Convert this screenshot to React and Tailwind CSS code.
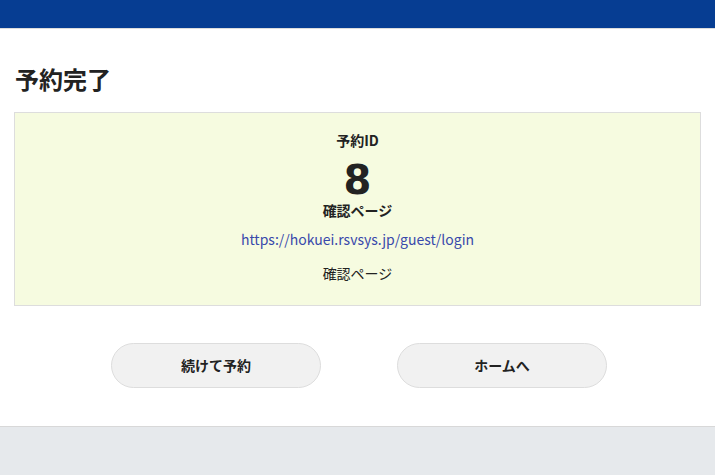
export default function App() {
  return (
    <div className="min-h-[475px] flex flex-col bg-white text-[#222] font-['Noto_Sans_CJK_JP','Noto_Sans',sans-serif]">
      <header className="h-[28px] bg-[#063d92] border-b border-[#dcdcdc] box-content" />
      <main className="flex-1 px-[14px] pt-[33px]">
        <h1 className="text-[24px] font-bold leading-[34px] pl-[1px]">予約完了</h1>
        <div className="mt-[16px] border border-[#dddddd] bg-[#f6fbe0] flex flex-col items-center pt-[16px] pb-[21px]">
          <div className="text-[14px] font-bold leading-[22px]">予約ID</div>
          <div className="mt-[6px] text-[40px] font-bold leading-[46px] font-['DejaVu_Sans',sans-serif]">8</div>
          <div className="-mt-[4px] text-[14px] font-bold leading-[22px]">確認ページ</div>
          <a href="#" className="mt-[7px] text-[14px] leading-[22px] text-[#3949ab]">
            https://hokuei.rsvsys.jp/guest/login
          </a>
          <div className="mt-[12px] text-[14px] leading-[22px]">確認ページ</div>
        </div>
        <div className="flex justify-center gap-[76px] mt-[37px] mb-[38px] pl-[3px]">
          <button className="w-[210px] h-[45px] rounded-full bg-[#f1f1f1] border border-[#dddddd] text-[14px] font-bold">
            続けて予約
          </button>
          <button className="w-[210px] h-[45px] rounded-full bg-[#f1f1f1] border border-[#dddddd] text-[14px] font-bold">
            ホームへ
          </button>
        </div>
      </main>
      <footer className="h-[49px] bg-[#e6e9ec] border-t border-[#d8d8d8]" />
    </div>
  )
}
